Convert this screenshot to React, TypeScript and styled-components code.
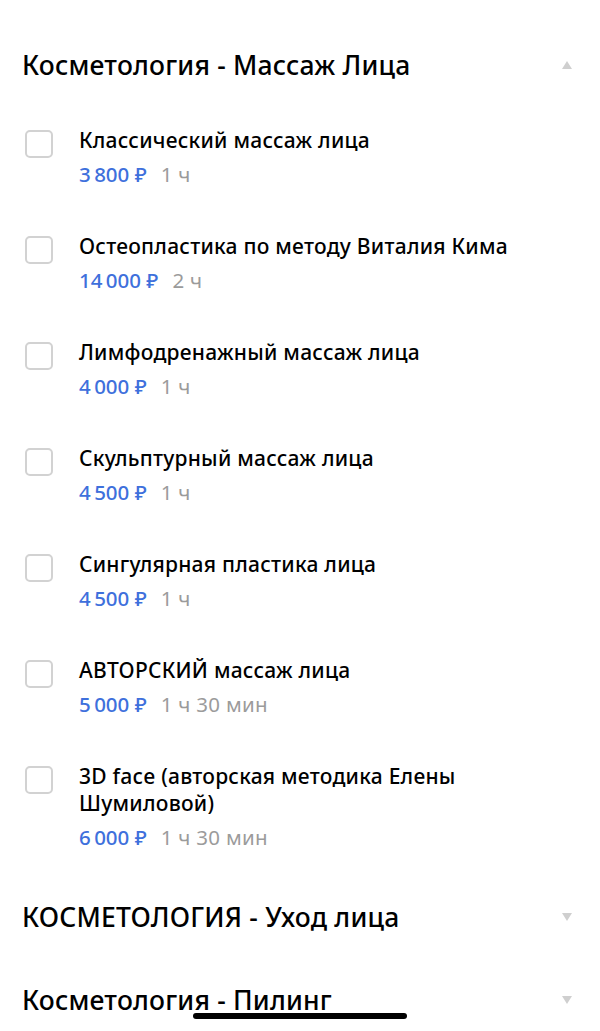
import React from 'react';
import styled, { createGlobalStyle } from 'styled-components';

const GlobalStyle = createGlobalStyle`
  html, body {
    margin: 0;
    padding: 0;
    background: #fff;
  }
  body {
    font-family: 'Noto Sans', 'Open Sans', sans-serif;
    color: #000;
    -webkit-font-smoothing: antialiased;
  }
`;

const Page = styled.div`
  width: 600px;
  height: 1031px;
  overflow: hidden;
  padding-top: 48px;
  box-sizing: border-box;
  display: flex;
  flex-direction: column;
  gap: 49px;
  position: relative;
`;

const Section = styled.section`
  display: flex;
  flex-direction: column;
`;

const SectionHeader = styled.div`
  display: flex;
  align-items: center;
  justify-content: space-between;
  padding: 0 22px;
  height: 34px;
`;

const SectionTitle = styled.h2`
  margin: 0;
  font-size: 26.5px;
  font-weight: 500;
  line-height: 34px;
  letter-spacing: 0.2px;
`;

const Arrow = styled.span<{ $up?: boolean }>`
  width: 0;
  height: 0;
  margin-right: 6px;
  border-left: 5px solid transparent;
  border-right: 5px solid transparent;
  ${p => (p.$up ? 'border-bottom: 8px solid #cfcfcf;' : 'border-top: 8px solid #cfcfcf;')}
`;

const ItemList = styled.div`
  display: flex;
  flex-direction: column;
  gap: 45px;
  padding-top: 45px;
`;

const Item = styled.div`
  display: flex;
  align-items: flex-start;
  gap: 26px;
  padding: 0 25px;
`;

const Checkbox = styled.span`
  flex: 0 0 auto;
  width: 28px;
  height: 28px;
  margin-top: 3px;
  box-sizing: border-box;
  border: 2px solid #d2d2d2;
  border-radius: 5px;
`;

const ItemBody = styled.div`
  display: flex;
  flex-direction: column;
  gap: 7px;
  max-width: 440px;
`;

const ItemTitle = styled.div`
  font-size: 21px;
  font-weight: 500;
  line-height: 27px;
  letter-spacing: 0.25px;
`;

const Meta = styled.div`
  display: flex;
  gap: 14px;
  font-size: 20.5px;
  line-height: 27px;
`;

const Price = styled.span`
  color: #3e70dc;
  font-weight: 500;
`;

const Duration = styled.span`
  color: #9b9b9b;
  letter-spacing: 0.3px;
`;

const HomeIndicator = styled.div`
  position: absolute;
  left: 193px;
  bottom: 12px;
  width: 214px;
  height: 6px;
  border-radius: 3px;
  background: #000;
`;

const TH = '\u202F';
const SP = '\u00A0';

const services = [
  { title: 'Классический массаж лица', price: `3${TH}800${SP}₽`, time: `1${SP}ч` },
  { title: 'Остеопластика по методу Виталия Кима', price: `14${TH}000${SP}₽`, time: `2${SP}ч` },
  { title: 'Лимфодренажный массаж лица', price: `4${TH}000${SP}₽`, time: `1${SP}ч` },
  { title: 'Скульптурный массаж лица', price: `4${TH}500${SP}₽`, time: `1${SP}ч` },
  { title: 'Сингулярная пластика лица', price: `4${TH}500${SP}₽`, time: `1${SP}ч` },
  { title: 'АВТОРСКИЙ массаж лица', price: `5${TH}000${SP}₽`, time: `1${SP}ч${SP}30${SP}мин` },
  { title: '3D face (авторская методика Елены Шумиловой)', price: `6${TH}000${SP}₽`, time: `1${SP}ч${SP}30${SP}мин` },
];

const App: React.FC = () => {
  return (
    <>
      <GlobalStyle />
      <Page>
        <Section>
          <SectionHeader>
            <SectionTitle>Косметология - Массаж Лица</SectionTitle>
            <Arrow $up />
          </SectionHeader>
          <ItemList>
            {services.map(s => (
              <Item key={s.title}>
                <Checkbox />
                <ItemBody>
                  <ItemTitle>{s.title}</ItemTitle>
                  <Meta>
                    <Price>{s.price}</Price>
                    <Duration>{s.time}</Duration>
                  </Meta>
                </ItemBody>
              </Item>
            ))}
          </ItemList>
        </Section>
        <Section>
          <SectionHeader>
            <SectionTitle>КОСМЕТОЛОГИЯ - Уход лица</SectionTitle>
            <Arrow />
          </SectionHeader>
        </Section>
        <Section>
          <SectionHeader>
            <SectionTitle>Косметология - Пилинг</SectionTitle>
            <Arrow />
          </SectionHeader>
        </Section>
        <HomeIndicator />
      </Page>
    </>
  );
};

export default App;
